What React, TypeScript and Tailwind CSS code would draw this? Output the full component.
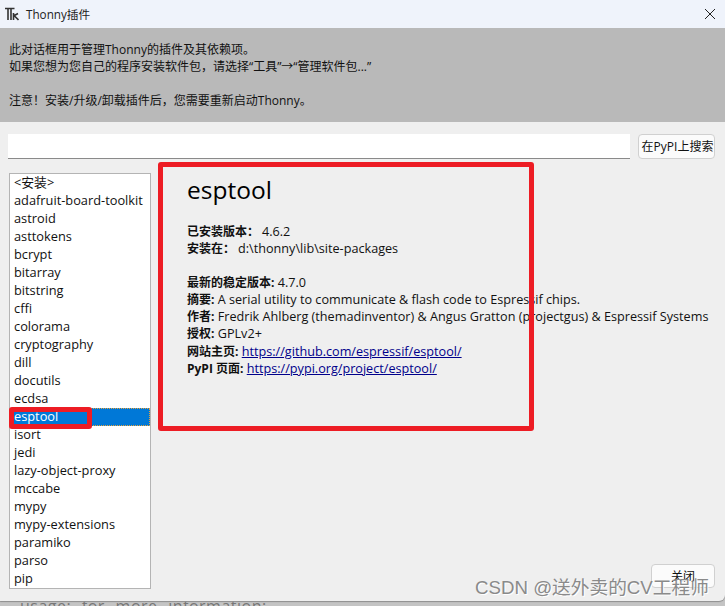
const packages = [
  "<安装>",
  "adafruit-board-toolkit",
  "astroid",
  "asttokens",
  "bcrypt",
  "bitarray",
  "bitstring",
  "cffi",
  "colorama",
  "cryptography",
  "dill",
  "docutils",
  "ecdsa",
  "esptool",
  "isort",
  "jedi",
  "lazy-object-proxy",
  "mccabe",
  "mypy",
  "mypy-extensions",
  "paramiko",
  "parso",
  "pip",
];

function ThonnyIcon() {
  return (
    <svg width="14" height="14" viewBox="0 0 14 14" fill="none" stroke="#333" strokeWidth="1.6">
      <path d="M0 1.5H9.5M3 1.5V13M6 1.5V13M8.5 6V13M8.5 9L13 6.5M9.5 9L13.5 13" />
    </svg>
  );
}

export default function App() {
  return (
    <div className="relative h-[606px] w-[725px] overflow-hidden bg-[#c4c4c4] text-[13px] leading-[17px] text-[#111] font-['Open_Sans','Noto_Sans_CJK_SC',sans-serif]">
      <div className="relative z-10 flex h-[601px] flex-col rounded-br-md bg-[#efefef] shadow-[0_1px_1px_#8f8f8f]">
        <header className="flex h-[28px] shrink-0 items-center justify-between bg-[#eff3fb] pl-[5px] pr-[9px]">
          <div className="flex items-center gap-[7px]">
            <ThonnyIcon />
            <span className="text-[11.7px] text-[#222]">Thonny插件</span>
          </div>
          <svg width="12" height="12" viewBox="0 0 12 12" stroke="#222" strokeWidth="1">
            <path d="M1 1L11 11M11 1L1 11" />
          </svg>
        </header>

        <section className="h-[94px] shrink-0 bg-[#b9b9b9] px-[9px] pt-[13px] text-[12px]">
          <p>此对话框用于管理Thonny的插件及其依赖项。</p>
          <p>如果您想为您自己的程序安装软件包，请选择“工具”→“管理软件包...”</p>
          <p className="mt-[17px]">注意！安装/升级/卸载插件后，您需要重新启动Thonny。</p>
        </section>

        <div className="flex gap-2 pl-2 pr-[10px] pt-3">
          <div className="h-[25px] flex-1 border-b border-[#8a8a8a] bg-white" />
          <button className="h-[25px] w-[77px] rounded-[4px] border border-[#d0d0d0] bg-[#fbfbfb] pl-[2px] text-[12px] whitespace-nowrap">
            在PyPI上搜索
          </button>
        </div>

        <div className="flex flex-1 pl-[9px] pt-[14px]">
          <ul className="h-[416px] w-[142px] shrink-0 border border-[#b4b4b4] bg-white text-[12.8px]">
            {packages.map((name) => (
              <li
                key={name}
                className={
                  name === "esptool"
                    ? "h-[18px] whitespace-nowrap border border-dotted border-[#e8a33d] bg-[#0078d7] pl-[3px] leading-[15px] text-white"
                    : "h-[18px] whitespace-nowrap pl-[4px] leading-[17px]"
                }
              >
                {name}
              </li>
            ))}
          </ul>

          <div className="flex-1 pl-[36px]">
            <h1 className="text-[24.5px] leading-[34px] text-black">esptool</h1>
            <div className="mt-[16px] whitespace-nowrap text-[12.65px] leading-[17px]">
              <p>
                <b className="text-[12px]">已安装版本：</b>
                <span className="ml-[3px]">4.6.2</span>
              </p>
              <p>
                <b className="text-[12px]">安装在：</b>
                <span className="ml-[3px]">d:\thonny\lib\site-packages</span>
              </p>
              <p className="mt-[17px]">
                <b className="text-[12px]">最新的稳定版本:</b> 4.7.0
              </p>
              <p>
                <b className="text-[12px]">摘要:</b> A serial utility to communicate &amp; flash code to Espressif chips.
              </p>
              <p>
                <b className="text-[12px]">作者:</b> Fredrik Ahlberg (themadinventor) &amp; Angus Gratton (projectgus) &amp; Espressif Systems
              </p>
              <p>
                <b className="text-[12px]">授权:</b> GPLv2+
              </p>
              <p className="mt-[1px]">
                <b className="text-[12px]">网站主页:</b>{" "}
                <a className="text-[#00008b] underline">https://github.com/espressif/esptool/</a>
              </p>
              <p>
                <b className="text-[12px]">PyPI 页面:</b>{" "}
                <a className="text-[#00008b] underline">https://pypi.org/project/esptool/</a>
              </p>
            </div>
          </div>
        </div>
      </div>

      {/* text of the page behind, cut off by the dialog */}
      <p className="-mt-[5px] pl-[20px] text-[16px] leading-[20px] tracking-[0.5px] whitespace-nowrap text-[#777] [word-spacing:6px]">
        usage: for more information:
      </p>

      {/* close button and watermark sit over the window */}
      <button className="absolute left-[651px] top-[564px] z-20 h-[24px] w-[64px] rounded-[4px] border border-[#d0d0d0] bg-[#fbfbfb] text-[12px]">
        关闭
      </button>
      <span className="absolute left-[475px] top-[576px] z-20 text-[18.7px] leading-[24px] whitespace-nowrap text-[#8a8a8a] [text-shadow:1px_1px_0_#fff] font-['Liberation_Sans','Noto_Sans_CJK_SC',sans-serif]">
        CSDN @送外卖的CV工程师
      </span>

      {/* red annotation boxes drawn on the screenshot */}
      <div className="pointer-events-none absolute left-[158px] top-[162px] z-20 h-[269px] w-[376px] rounded-[3px] border-[5px] border-[#ed1c24]" />
      <div className="pointer-events-none absolute left-[9px] top-[407px] z-20 h-[22px] w-[83px] rounded-[3px] border-[5px] border-[#ed1c24]" />
    </div>
  );
}
